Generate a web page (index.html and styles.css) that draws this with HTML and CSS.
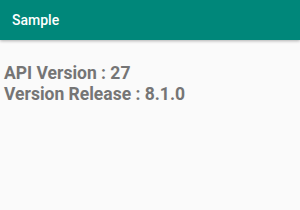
FILE: index.html
```html
<!DOCTYPE html>
<html>
<head>
<meta charset="utf-8">
<link rel="stylesheet" href="styles.css">
</head>
<body>
<div class="toolbar"><span class="title">Sample</span></div>
<div class="content">
  <div class="line">API Version : 27</div>
  <div class="line">Version Release : 8.1.0</div>
</div>
</body>
</html>
```
FILE: styles.css
```css
html, body {
  margin: 0;
  padding: 0;
  background: #fafafa;
  font-family: Roboto, "Liberation Sans", sans-serif;
}
.toolbar {
  height: 40px;
  background: #00877a;
  display: flex;
  align-items: center;
  padding-left: 12px;
  box-shadow: 0 1px 3px rgba(0,0,0,0.3);
}
.title {
  color: #ffffff;
  font-size: 14px;
  font-weight: 500;
}
.content {
  padding: 23px 4px 0;
}
.line {
  color: #757575;
  font-size: 17.5px;
  font-weight: 700;
  line-height: 21px;
}
```
